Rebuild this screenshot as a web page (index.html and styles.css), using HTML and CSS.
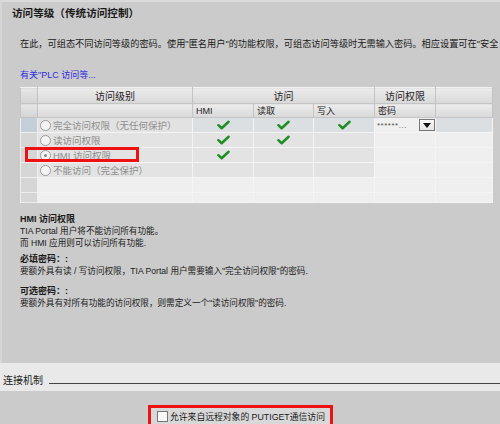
FILE: index.html
```html
<!DOCTYPE html>
<html lang="zh-CN">
<head>
<meta charset="utf-8">
<link rel="stylesheet" href="styles.css">
</head>
<body>
<div class="panel">
  <h1 class="title">访问等级（传统访问控制）</h1>
  <p class="desc">在此，可组态不同访问等级的密码。使用"匿名用户"的功能权限，可组态访问等级时无需输入密码。相应设置可在"安全</p>
  <a class="link">有关"PLC 访问等...</a>
  <div class="grid-wrap">
    <table class="grid">
      <colgroup>
        <col class="c0"><col class="c1"><col class="c2"><col class="c3"><col class="c4"><col class="c5"><col class="c6">
      </colgroup>
      <tr class="h1">
        <th class="rh"></th><th>访问级别</th><th colspan="3">访问</th><th>访问权限</th><th></th>
      </tr>
      <tr class="h2">
        <th class="rh"></th><th></th><th class="l">HMI</th><th class="l">读取</th><th class="l">写入</th><th class="l">密码</th><th></th>
      </tr>
      <tr class="r sel">
        <td class="rh"></td>
        <td class="lvl"><span class="radio"></span>完全访问权限（无任何保护）</td>
        <td class="ck"><svg viewBox="0 0 14 10" width="13" height="10"><path d="M1.5 5.2 L5 8.5 L12.5 1.5" fill="none" stroke="#1d8f22" stroke-width="2.6" stroke-linecap="round" stroke-linejoin="round"/></svg></td>
        <td class="ck"><svg viewBox="0 0 14 10" width="13" height="10"><path d="M1.5 5.2 L5 8.5 L12.5 1.5" fill="none" stroke="#1d8f22" stroke-width="2.6" stroke-linecap="round" stroke-linejoin="round"/></svg></td>
        <td class="ck"><svg viewBox="0 0 14 10" width="13" height="10"><path d="M1.5 5.2 L5 8.5 L12.5 1.5" fill="none" stroke="#1d8f22" stroke-width="2.6" stroke-linecap="round" stroke-linejoin="round"/></svg></td>
        <td class="pw"><div class="pwbox"><span class="stars">******...</span><span class="dd"><svg viewBox="0 0 8 5" width="8" height="5"><path d="M0 0 H8 L4 5 Z" fill="#111"/></svg></span></div></td>
        <td class="ex"></td>
      </tr>
      <tr class="r">
        <td class="rh"></td>
        <td class="lvl"><span class="radio"></span>读访问权限</td>
        <td class="ck"><svg viewBox="0 0 14 10" width="13" height="10"><path d="M1.5 5.2 L5 8.5 L12.5 1.5" fill="none" stroke="#1d8f22" stroke-width="2.6" stroke-linecap="round" stroke-linejoin="round"/></svg></td>
        <td class="ck"><svg viewBox="0 0 14 10" width="13" height="10"><path d="M1.5 5.2 L5 8.5 L12.5 1.5" fill="none" stroke="#1d8f22" stroke-width="2.6" stroke-linecap="round" stroke-linejoin="round"/></svg></td>
        <td class="ck"></td>
        <td class="pw"></td>
        <td class="ex"></td>
      </tr>
      <tr class="r">
        <td class="rh"></td>
        <td class="lvl"><span class="radio on"></span>HMI 访问权限</td>
        <td class="ck"><svg viewBox="0 0 14 10" width="13" height="10"><path d="M1.5 5.2 L5 8.5 L12.5 1.5" fill="none" stroke="#1d8f22" stroke-width="2.6" stroke-linecap="round" stroke-linejoin="round"/></svg></td>
        <td class="ck"></td>
        <td class="ck"></td>
        <td class="pw"></td>
        <td class="ex"></td>
      </tr>
      <tr class="r">
        <td class="rh"></td>
        <td class="lvl"><span class="radio"></span>不能访问（完全保护）</td>
        <td class="ck"></td>
        <td class="ck"></td>
        <td class="ck"></td>
        <td class="pw"></td>
        <td class="ex"></td>
      </tr>
      <tr class="r empty">
        <td class="rh"></td><td></td><td></td><td></td><td></td><td></td><td></td>
      </tr>
      <tr class="r empty last">
        <td class="rh"></td><td></td><td></td><td></td><td></td><td></td><td></td>
      </tr>
    </table>
    <div class="hl"></div>
  </div>
  <div class="info">
    <div class="blk">
      <div class="hd">HMI 访问权限</div>
      <div>TIA Portal 用户将不能访问所有功能。</div>
      <div>而 HMI 应用则可以访问所有功能.</div>
    </div>
    <div class="blk b2">
      <div class="hd">必填密码：:</div>
      <div>要额外具有读 / 写访问权限，TIA Portal 用户需要输入"完全访问权限"的密码.</div>
    </div>
    <div class="blk b3">
      <div class="hd">可选密码：:</div>
      <div>要额外具有对所有功能的访问权限，则需定义一个"读访问权限"的密码.</div>
    </div>
  </div>
</div>
<div class="band">
  <span class="band-label">连接机制</span>
  <span class="rule"></span>
</div>
<div class="bottom">
  <label class="putget"><span class="cb"></span>允许来自远程对象的 PUTIGET通信访问</label>
</div>
</body>
</html>
```
FILE: styles.css
```css
html, body {
  margin: 0;
  padding: 0;
}
body {
  width: 500px;
  height: 424px;
  overflow: hidden;
  background: #cbcbcb;
  font-family: "Liberation Sans", "Noto Sans CJK SC", sans-serif;
  color: #1a1a1a;
}
.panel {
  height: 363px;
  box-sizing: border-box;
  border-top: 2px solid #dadada;
  border-left: 2px solid #d6d6d6;
  overflow: hidden;
}
.title {
  margin: 4px 0 0 10px;
  font-size: 10.6px;
  line-height: 14px;
  font-weight: bold;
  white-space: nowrap;
}
.desc {
  margin: 18px 0 0 18px;
  width: 478px;
  overflow: hidden;
  font-size: 9.2px;
  line-height: 12px;
  white-space: nowrap;
}
.link {
  display: block;
  margin: 19px 0 0 18px;
  font-size: 9px;
  line-height: 12px;
  color: #2b2be0;
}
.grid-wrap {
  position: relative;
  margin: 6px 0 0 18px;
  width: 472px;
}
.grid {
  border-collapse: collapse;
  table-layout: fixed;
  width: 472px;
  font-size: 9.5px;
}
.c0 { width: 17px; }
.c1 { width: 155px; }
.c2 { width: 61px; }
.c3 { width: 60px; }
.c4 { width: 61px; }
.c5 { width: 61px; }
.c6 { width: 57px; }
.grid th, .grid td {
  padding: 0;
  overflow: hidden;
  white-space: nowrap;
}
.grid th {
  font-weight: normal;
  color: #222;
  background: linear-gradient(#ececec, #e2e2e2 50%, #d9d9d9);
  border: 1px solid #c4c4c4;
  border-top-color: #f2f2f2;
  text-align: center;
}
.grid th.l {
  text-align: left;
  padding-left: 3px;
  font-size: 9px;
}
.h1 th { height: 14px; font-size: 10px; }
.h2 th { height: 13px; }
.grid th.rh {
  background: linear-gradient(#e6e6e6, #d4d4d4);
}
.grid td {
  height: 14px;
  background: #e3e3e3;
  border: 1px solid #f4f4f4;
  color: #8e8e8e;
}
.grid td.rh { background: #d6d6d6; border-color: #ededed; }
.grid tr.sel td { background: #dcdfe2; }
.grid tr.sel td.rh { background: #c5cfd9; }
.grid tr.sel td.lvl { background: #e2e2e2; }
.grid td.pw, .grid td.ex, .grid tr.empty td { background: #efefef; }
.grid tr.sel td.pw { background: #f0f0f0; }
.grid tr.empty td.rh { background: #d6d6d6; }
.grid tr.last td { height: 9px; }
.lvl {
  font-size: 9.5px;
  padding-left: 2px !important;
}
.radio {
  display: inline-block;
  width: 9px;
  height: 9px;
  border: 1px solid #9a9a9a;
  border-radius: 50%;
  background: #f4f4f4;
  vertical-align: -2px;
  margin-right: 2px;
  position: relative;
}
.radio.on::after {
  content: "";
  position: absolute;
  left: 3px;
  top: 3px;
  width: 3px;
  height: 3px;
  border-radius: 50%;
  background: #8a8a8a;
}
.ck { text-align: center; }
.ck svg { display: block; margin: 0 auto; }
.pwbox {
  display: flex;
  align-items: center;
  justify-content: space-between;
  padding-left: 2px;
}
.stars {
  color: #555;
  font-size: 8px;
  letter-spacing: 0.5px;
}
.dd {
  width: 16px;
  height: 12px;
  box-sizing: border-box;
  border: 1px solid #777;
  background: linear-gradient(#fafafa, #e4e4e4);
  display: flex;
  align-items: center;
  justify-content: center;
}
.hl {
  position: absolute;
  left: 5px;
  top: 60px;
  width: 114px;
  height: 15px;
  box-sizing: border-box;
  border: 3px solid #ee1111;
}
.info {
  margin: 10px 0 0 18px;
  font-size: 8.6px;
  line-height: 12px;
  white-space: nowrap;
}
.hd {
  font-weight: bold;
  font-size: 9px;
}
.b2 { margin-top: 4px; }
.b3 { margin-top: 8px; }
.band {
  height: 28px;
  background: #e9e9e9;
  display: flex;
  align-items: center;
  padding-top: 4px;
  box-sizing: border-box;
}
.band-label {
  margin-left: 3px;
  font-size: 10px;
  color: #222;
}
.rule {
  flex: 1;
  height: 1px;
  background: #444;
  margin: 8px 0 0 6px;
}
.bottom {
  padding: 14px 0 0 148px;
}
.putget {
  display: flex;
  align-items: center;
  width: 185px;
  height: 24px;
  box-sizing: border-box;
  border: 3px solid #ee1111;
  border-bottom: none;
  background: #d8d8d8;
  padding: 0 0 5px 6px;
  font-size: 8.8px;
  color: #1a1a1a;
  white-space: nowrap;
}
.cb {
  width: 9px;
  height: 9px;
  border: 1px solid #777;
  background: #f8f8f8;
  margin-right: 2px;
  flex: none;
}
```
